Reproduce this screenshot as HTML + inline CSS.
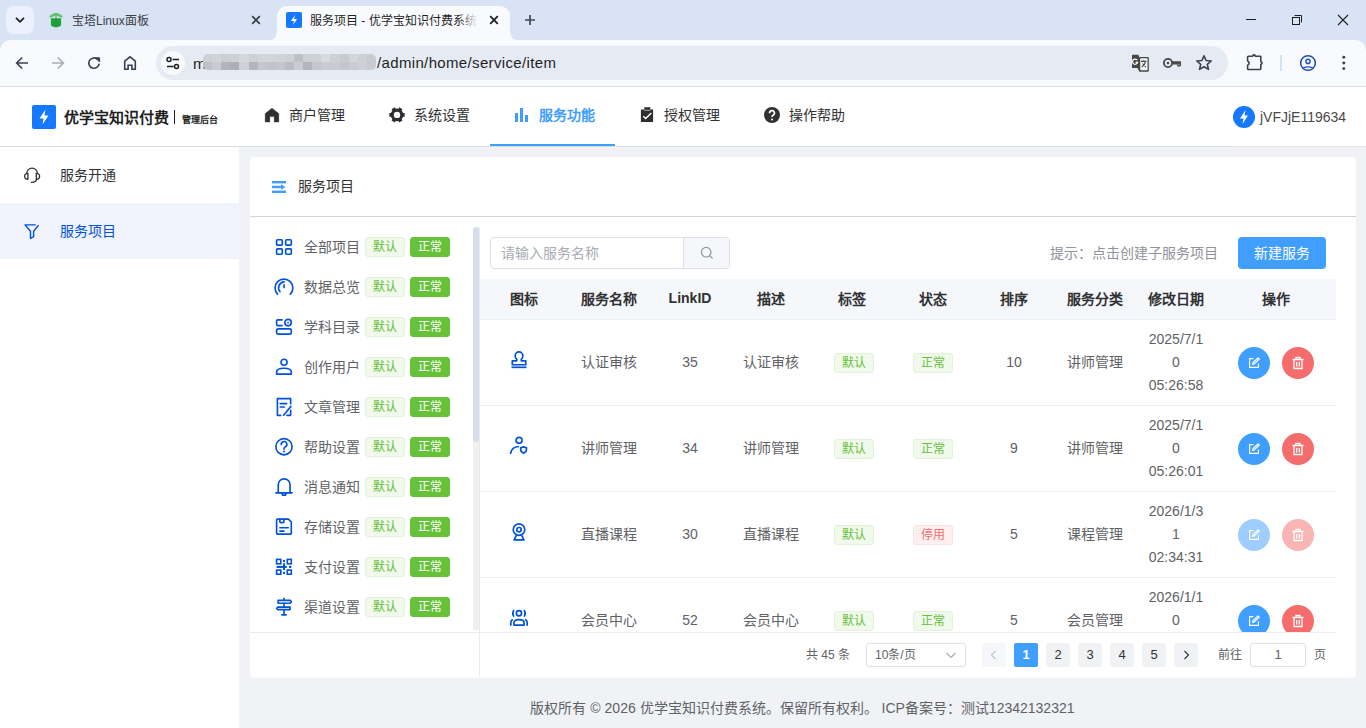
<!DOCTYPE html>
<html lang="zh-CN"><head><meta charset="utf-8">
<style>
*{box-sizing:border-box;margin:0;padding:0}
html,body{width:1366px;height:728px;overflow:hidden;background:#f0f2f5;font-family:"Liberation Sans",sans-serif;color:#303133}
.abs{position:absolute}
svg{display:block}
/* chrome */
#tabstrip{position:absolute;left:0;top:0;width:1366px;height:50px;background:#d8e3f6}
#toolbar{position:absolute;left:0;top:40px;width:1366px;height:46px;background:#f8fafd;border-radius:10px 10px 0 0}
#tbborder{position:absolute;left:0;top:86px;width:1366px;height:1px;background:#d9dfe8}
.tab-text{position:absolute;font-size:12px;line-height:16px;color:#3c4043;white-space:nowrap}
/* header */
#header{position:absolute;left:0;top:87px;width:1366px;height:59px;background:#fff}
#hborder{position:absolute;left:0;top:146px;width:1233px;height:1px;background:#dcdee6}
.nav{position:absolute;top:87px;height:59px;font-size:14px;color:#303133;white-space:nowrap}
/* sidebar */
#sidebar{position:absolute;left:0;top:147px;width:239px;height:581px;background:#fff}
.side-item{position:absolute;left:0;width:239px;height:56px;font-size:14px;color:#303133}
/* card */
#card{position:absolute;left:250px;top:157px;width:1106px;height:521px;background:#fff;border-radius:4px}
.tag{position:absolute;height:20px;width:40px;border-radius:3px;font-size:12px;line-height:18px;text-align:center}
.tag-def{background:#f0f9eb;border:1px solid #e1f3d8;color:#67c23a}
.tag-ok{background:#67c23a;border:1px solid #67c23a;color:#fff}
.tag-stop{background:#fef0f0;border:1px solid #fde2e2;color:#f56c6c}
.li{position:absolute;left:250px;width:224px;height:40px}
.li .t{position:absolute;left:54px;top:11px;font-size:14px;color:#606266;line-height:18px}
.li svg{position:absolute;left:25px;top:12px}
table{border-collapse:separate;border-spacing:0;table-layout:fixed;position:absolute;left:480px;top:279px;width:856px}
th{height:41px;padding:0 0 2px 0;background:#f5f7fa;font-size:14px;font-weight:bold;color:#303133;border-bottom:1px solid #ebeef5;text-align:center}
td{height:86px;padding:0;font-size:14px;color:#606266;border-bottom:1px solid #ebeef5;text-align:center;line-height:23px;position:relative}
.cbtn{display:inline-block;width:32px;height:32px;border-radius:50%;vertical-align:middle;position:relative}
.pg{position:absolute;top:643px;width:24px;height:24px;background:#f0f2f5;border-radius:2px;font-size:13px;line-height:24px;text-align:center;color:#303133;font-weight:normal}
</style></head><body>

<!-- ============ CHROME ============ -->
<div id="tabstrip"></div>
<!-- tab list button -->
<div class="abs" style="left:6px;top:6px;width:28px;height:28px;border-radius:8px;background:#eaf0fc"></div>
<svg class="abs" style="left:14px;top:15px" width="12" height="10" viewBox="0 0 12 10"><path d="M2 2.8L6 6.8L10 2.8" stroke="#1f1f1f" stroke-width="1.7" fill="none"/></svg>
<!-- tab 1 -->
<svg class="abs" style="left:44px;top:8px" width="24" height="24" viewBox="0 0 24 24"><path d="M6.9 10.2H17.1V16.8C17.1 18 14.8 19.2 12 19.3C9.2 19.2 6.9 18 6.9 16.8Z" fill="#22a33a"/><path d="M12 10.2V19.3" stroke="#1b8e30" stroke-width=".6"/><g stroke="#4fb75e" stroke-width="1.3" fill="none" opacity=".9"><path d="M5.6 9.1L12 6.8L18.4 9.1"/><path d="M6.3 7.5L12 5.4L17.7 7.5"/><path d="M12 4.9V9.9"/></g></svg>
<div class="tab-text" style="left:72px;top:13px">宝塔Linux面板</div>
<svg class="abs" style="left:251px;top:15px" width="10" height="10" viewBox="0 0 10 10"><path d="M1.2 1.2L8.8 8.8M8.8 1.2L1.2 8.8" stroke="#3c4043" stroke-width="1.8"/></svg>
<!-- active tab -->
<div class="abs" style="left:277px;top:6px;width:233px;height:40px;background:#f8fafd;border-radius:10px 10px 0 0"></div>
<svg class="abs" style="left:269px;top:30px" width="8" height="10"><path d="M0 10 Q8 10 8 0 L8 10Z" fill="#f8fafd"/></svg>
<svg class="abs" style="left:510px;top:30px" width="8" height="10"><path d="M8 10 Q0 10 0 0 L0 10Z" fill="#f8fafd"/></svg>
<div class="abs" style="left:286px;top:12px;width:16px;height:16px;background:#1677ff;border-radius:2px"></div>
<svg class="abs" style="left:286px;top:12px" width="16" height="16" viewBox="0 0 16 16"><path d="M9 3 L5 9 L8 9 L7 13 L11 7 L8 7Z" fill="#fff"/></svg>
<div class="tab-text" style="left:310px;top:13px;width:170px;overflow:hidden;color:#1f1f1f">服务项目 - 优学宝知识付费系统</div>
<div class="abs" style="left:458px;top:8px;width:24px;height:24px;background:linear-gradient(90deg,rgba(248,250,253,0),rgba(248,250,253,.85) 70%,#f8fafd)"></div>
<svg class="abs" style="left:489px;top:15px" width="10" height="10" viewBox="0 0 10 10"><path d="M1.2 1.2L8.8 8.8M8.8 1.2L1.2 8.8" stroke="#1f1f1f" stroke-width="1.8"/></svg>
<svg class="abs" style="left:523px;top:13px" width="14" height="14" viewBox="0 0 14 14"><path d="M7 2V12M2 7H12" stroke="#3f4753" stroke-width="1.7"/></svg>
<!-- window controls -->
<svg class="abs" style="left:1246px;top:18px" width="10" height="3"><rect x="0" y="1" width="10" height="1" fill="#1f1f1f"/></svg>
<svg class="abs" style="left:1291px;top:14px" width="12" height="12" viewBox="0 0 12 12"><rect x="1.5" y="3.5" width="7" height="7" stroke="#1f1f1f" fill="none"/><path d="M3.5 1.5H10.5V8.5" stroke="#1f1f1f" fill="none"/></svg>
<svg class="abs" style="left:1337px;top:14px" width="12" height="12" viewBox="0 0 12 12"><path d="M1 1L11 11M11 1L1 11" stroke="#1f1f1f" stroke-width="1.1"/></svg>

<div id="toolbar"></div>
<div id="tbborder"></div>
<!-- nav icons -->
<svg class="abs" style="left:14px;top:51px" width="16" height="24" viewBox="0 0 16 24"><path d="M14 12H3M8.2 6.5L2.6 12L8.2 17.5" stroke="#38414f" stroke-width="1.6" fill="none"/></svg>
<svg class="abs" style="left:50px;top:51px" width="16" height="24" viewBox="0 0 16 24"><path d="M2 12H13M7.8 6.5L13.4 12L7.8 17.5" stroke="#a9adb4" stroke-width="1.6" fill="none"/></svg>
<svg class="abs" style="left:86px;top:51px" width="16" height="24" viewBox="0 0 16 24"><path d="M13.2 12.6A5.2 5.2 0 1 1 11.6 8.3" stroke="#38414f" stroke-width="1.6" fill="none"/><path d="M9.4 6.8H13.6V11Z" fill="#38414f" stroke="#38414f" stroke-width="1"/></svg>
<svg class="abs" style="left:122px;top:51px" width="16" height="24" viewBox="0 0 16 24"><path d="M2.7 18.2V10.2L8 5.8L13.3 10.2V18.2H9.9V14.3H6.1V18.2Z" stroke="#38414f" stroke-width="1.6" fill="none" stroke-linejoin="miter"/></svg>
<!-- url pill -->
<div class="abs" style="left:156px;top:46px;width:1072px;height:34px;border-radius:17px;background:#e6ebf3"></div>
<div class="abs" style="left:161px;top:51px;width:24px;height:24px;border-radius:12px;background:#f8fafd"></div>
<svg class="abs" style="left:165px;top:55px" width="16" height="16" viewBox="0 0 16 16"><circle cx="4" cy="4.5" r="2" stroke="#1f1f1f" stroke-width="1.5" fill="none"/><path d="M7.5 4.5H14M2 11.5H8.5" stroke="#1f1f1f" stroke-width="1.5"/><circle cx="11.5" cy="11.5" r="2" stroke="#1f1f1f" stroke-width="1.5" fill="none"/></svg>
<div class="abs" style="left:193px;top:55px;font-size:15.5px;color:#1f1f1f">m</div>
<div class="abs" style="left:203px;top:54px;width:173px;height:16px;border-radius:5px;overflow:hidden"><div style="position:absolute;left:0.0px;top:0;width:9.2px;height:8px;background:rgb(205,208,214)"></div><div style="position:absolute;left:0.0px;top:8px;width:9.2px;height:8px;background:rgb(190,193,199)"></div><div style="position:absolute;left:9.1px;top:0;width:9.2px;height:8px;background:rgb(208,211,217)"></div><div style="position:absolute;left:9.1px;top:8px;width:9.2px;height:8px;background:rgb(200,203,209)"></div><div style="position:absolute;left:18.2px;top:0;width:9.2px;height:8px;background:rgb(203,206,212)"></div><div style="position:absolute;left:18.2px;top:8px;width:9.2px;height:8px;background:rgb(178,181,187)"></div><div style="position:absolute;left:27.3px;top:0;width:9.2px;height:8px;background:rgb(205,208,214)"></div><div style="position:absolute;left:27.3px;top:8px;width:9.2px;height:8px;background:rgb(172,175,181)"></div><div style="position:absolute;left:36.4px;top:0;width:9.2px;height:8px;background:rgb(212,215,221)"></div><div style="position:absolute;left:36.4px;top:8px;width:9.2px;height:8px;background:rgb(205,208,214)"></div><div style="position:absolute;left:45.5px;top:0;width:9.2px;height:8px;background:rgb(205,208,214)"></div><div style="position:absolute;left:45.5px;top:8px;width:9.2px;height:8px;background:rgb(178,181,187)"></div><div style="position:absolute;left:54.6px;top:0;width:9.2px;height:8px;background:rgb(210,213,219)"></div><div style="position:absolute;left:54.6px;top:8px;width:9.2px;height:8px;background:rgb(195,198,204)"></div><div style="position:absolute;left:63.7px;top:0;width:9.2px;height:8px;background:rgb(210,213,219)"></div><div style="position:absolute;left:63.7px;top:8px;width:9.2px;height:8px;background:rgb(192,195,201)"></div><div style="position:absolute;left:72.8px;top:0;width:9.2px;height:8px;background:rgb(208,211,217)"></div><div style="position:absolute;left:72.8px;top:8px;width:9.2px;height:8px;background:rgb(195,198,204)"></div><div style="position:absolute;left:81.9px;top:0;width:9.2px;height:8px;background:rgb(205,208,214)"></div><div style="position:absolute;left:81.9px;top:8px;width:9.2px;height:8px;background:rgb(185,188,194)"></div><div style="position:absolute;left:91.0px;top:0;width:9.2px;height:8px;background:rgb(190,193,199)"></div><div style="position:absolute;left:91.0px;top:8px;width:9.2px;height:8px;background:rgb(200,203,209)"></div><div style="position:absolute;left:100.1px;top:0;width:9.2px;height:8px;background:rgb(205,208,214)"></div><div style="position:absolute;left:100.1px;top:8px;width:9.2px;height:8px;background:rgb(178,181,187)"></div><div style="position:absolute;left:109.2px;top:0;width:9.2px;height:8px;background:rgb(205,208,214)"></div><div style="position:absolute;left:109.2px;top:8px;width:9.2px;height:8px;background:rgb(195,198,204)"></div><div style="position:absolute;left:118.3px;top:0;width:9.2px;height:8px;background:rgb(215,218,224)"></div><div style="position:absolute;left:118.3px;top:8px;width:9.2px;height:8px;background:rgb(200,203,209)"></div><div style="position:absolute;left:127.4px;top:0;width:9.2px;height:8px;background:rgb(205,208,214)"></div><div style="position:absolute;left:127.4px;top:8px;width:9.2px;height:8px;background:rgb(200,203,209)"></div><div style="position:absolute;left:136.5px;top:0;width:9.2px;height:8px;background:rgb(200,203,209)"></div><div style="position:absolute;left:136.5px;top:8px;width:9.2px;height:8px;background:rgb(195,198,204)"></div><div style="position:absolute;left:145.6px;top:0;width:9.2px;height:8px;background:rgb(210,213,219)"></div><div style="position:absolute;left:145.6px;top:8px;width:9.2px;height:8px;background:rgb(200,203,209)"></div><div style="position:absolute;left:154.7px;top:0;width:9.2px;height:8px;background:rgb(205,208,214)"></div><div style="position:absolute;left:154.7px;top:8px;width:9.2px;height:8px;background:rgb(205,208,214)"></div><div style="position:absolute;left:163.8px;top:0;width:9.2px;height:8px;background:rgb(200,203,209)"></div><div style="position:absolute;left:163.8px;top:8px;width:9.2px;height:8px;background:rgb(200,203,209)"></div></div>
<div class="abs" style="left:377px;top:54px;font-size:15px;letter-spacing:0.35px;color:#1f1f1f;white-space:nowrap">/admin/home/service/item</div>
<!-- right icons -->
<svg class="abs" style="left:1128px;top:52px" width="24" height="22" viewBox="0 0 24 22"><path d="M4.6 2.8H10.5L11.5 5.5V16H4.6A0.6 0.6 0 0 1 4 15.4V3.4A0.6 0.6 0 0 1 4.6 2.8Z" fill="#474747"/><rect x="11.6" y="5.6" width="8.6" height="13.4" rx="0.6" fill="#f2f4f8" stroke="#474747" stroke-width="1.3"/><path d="M10 16L12.2 19" stroke="#474747" stroke-width="1.3"/><path d="M9.2 8.2A2.6 2.6 0 1 0 9.6 10.3H7.5" stroke="#fff" stroke-width="1.2" fill="none"/><path d="M13 9.4H18.4M15.7 8.2V9.4M17.6 9.4C17 12.2 15.6 14 13.8 15M14.5 11.5L17.8 15.2" stroke="#474747" stroke-width="1.1" fill="none"/></svg>
<svg class="abs" style="left:1161px;top:55px" width="22" height="16" viewBox="0 0 22 16"><circle cx="7" cy="8" r="4.1" stroke="#474747" stroke-width="1.8" fill="none"/><circle cx="7" cy="8" r="1.3" fill="#474747"/><path d="M11 6.3H19.2A0.8 0.8 0 0 1 20 7.1V10.6A0.8 0.8 0 0 1 19.2 11.4H16.2V9.6H11Z" fill="#474747"/><rect x="16.8" y="8.8" width="2" height="1.6" fill="#8a8d92"/></svg>
<svg class="abs" style="left:1195px;top:54px" width="18" height="18" viewBox="0 0 18 18"><path d="M9 1.8L11.1 6.5L16.2 7L12.3 10.4L13.5 15.4L9 12.8L4.5 15.4L5.7 10.4L1.8 7L6.9 6.5Z" stroke="#38414f" stroke-width="1.6" fill="none" stroke-linejoin="round"/></svg>
<svg class="abs" style="left:1244px;top:51px" width="20" height="22" viewBox="0 0 20 22"><path d="M4.4 5.2H8.7A1.3 1.3 0 0 1 11.3 5.2H16A0.8 0.8 0 0 1 16.8 6V10.8A1.3 1.3 0 0 1 16.8 13.4V17.7A0.8 0.8 0 0 1 16 18.5H4.4A0.8 0.8 0 0 1 3.6 17.7V14.2A2.2 2.2 0 0 0 3.6 10V6A0.8 0.8 0 0 1 4.4 5.2Z" stroke="#38414f" stroke-width="1.6" fill="none" stroke-linejoin="round"/></svg>
<div class="abs" style="left:1280px;top:55px;width:2px;height:16px;background:#d3e1f9"></div>
<svg class="abs" style="left:1298px;top:53px" width="20" height="20" viewBox="0 0 20 20"><defs><clipPath id="pc"><circle cx="10" cy="10" r="7.2"/></clipPath></defs><circle cx="10" cy="10" r="7.3" stroke="#1e4db7" stroke-width="1.5" fill="none"/><circle cx="10" cy="8.4" r="2.1" stroke="#1e4db7" stroke-width="1.4" fill="none"/><ellipse cx="10" cy="17.2" rx="6.2" ry="3.3" stroke="#1e4db7" stroke-width="1.4" fill="none" clip-path="url(#pc)"/></svg>
<svg class="abs" style="left:1341px;top:54px" width="6" height="18"><circle cx="2.8" cy="3.3" r="1.45" fill="#38414f"/><circle cx="2.8" cy="9" r="1.45" fill="#38414f"/><circle cx="2.8" cy="14.6" r="1.45" fill="#38414f"/></svg>

<!-- ============ APP HEADER ============ -->
<div id="header"></div>
<div id="hborder"></div><div class="abs" style="left:1233px;top:146px;width:133px;height:1px;background:#e5e6eb"></div>

<!-- logo -->
<div class="abs" style="left:32px;top:105px;width:24px;height:24px;background:#1677ff;border-radius:2px"></div>
<svg class="abs" style="left:32px;top:105px" width="24" height="24" viewBox="0 0 24 24"><path d="M13.5 4.5 L7.5 13.5 L11.5 13.5 L10.5 19.5 L16.5 10.5 L12.5 10.5Z" fill="#fff"/></svg>
<div class="abs" style="left:64px;top:106px;font-size:15px;font-weight:bold;color:#1f1f1f;white-space:nowrap">优学宝知识付费</div>
<div class="abs" style="left:174px;top:110px;width:1px;height:14px;background:#1f1f1f"></div>
<div class="abs" style="left:182px;top:113px;font-size:9px;font-weight:bold;color:#1f1f1f;white-space:nowrap">管理后台</div>
<!-- nav -->
<svg class="abs" style="left:260px;top:103px" width="24" height="24" viewBox="0 0 24 24"><path d="M12 5.2L5.2 10.6V18.9H9.8V13.6H14.2V18.9H18.8V10.6Z" fill="#2d2e30" stroke="#2d2e30" stroke-width=".4" stroke-linejoin="round"/></svg>
<div class="nav" style="left:289px;line-height:56px">商户管理</div>
<svg class="abs" style="left:385px;top:103px" width="24" height="24" viewBox="0 0 24 24"><path d="M17.46 8.75 L18.02 10.04 L19.67 10.02 L19.67 13.78 L18.02 13.76 L17.46 15.05 L16.62 16.18 L17.46 17.61 L14.21 19.48 L13.40 18.04 L12.00 18.20 L10.60 18.04 L9.79 19.48 L6.54 17.61 L7.38 16.18 L6.54 15.05 L5.98 13.76 L4.33 13.78 L4.33 10.02 L5.98 10.04 L6.54 8.75 L7.38 7.62 L6.54 6.19 L9.79 4.32 L10.60 5.76 L12.00 5.60 L13.40 5.76 L14.21 4.32 L17.46 6.19 L16.62 7.62Z M15.2 11.9A3.2 3.2 0 1 0 8.8 11.9A3.2 3.2 0 1 0 15.2 11.9Z" fill="#2d2e30" fill-rule="evenodd"/></svg>
<div class="nav" style="left:414px;line-height:56px">系统设置</div>
<svg class="abs" style="left:514px;top:108px" width="16" height="14" viewBox="0 0 16 14"><rect x="1" y="5" width="3" height="9" fill="#409eff"/><rect x="6" y="0" width="3" height="14" fill="#409eff"/><rect x="11" y="7" width="3" height="7" fill="#409eff"/></svg>
<div class="nav" style="left:539px;line-height:56px;color:#409eff;font-weight:bold">服务功能</div>
<div class="abs" style="left:490px;top:144px;width:125px;height:2px;background:#409eff"></div>
<svg class="abs" style="left:636px;top:103px" width="24" height="24" viewBox="0 0 24 24"><path d="M4.9 6.4H8.6L8.1 4.3H14.5L14 6.4H17.1V19H4.9Z" fill="#2d2e30"/><path d="M8.2 7.3H14.4" stroke="#aaa" stroke-width="1"/><path d="M7.3 13.2L9.7 15.6L15.3 10" stroke="#fff" stroke-width="1.4" fill="none"/></svg>
<div class="nav" style="left:664px;line-height:56px">授权管理</div>
<svg class="abs" style="left:764px;top:107px" width="16" height="16" viewBox="0 0 16 16"><circle cx="8" cy="8" r="8" fill="#303133"/><path d="M5.6 6.2A2.4 2.4 0 1 1 9 8.2C8.2 8.6 8 9 8 10" stroke="#fff" stroke-width="1.7" fill="none"/><circle cx="8" cy="12.4" r="1" fill="#fff"/></svg>
<div class="nav" style="left:789px;line-height:56px">操作帮助</div>
<!-- user -->
<div class="abs" style="left:1233px;top:106px;width:22px;height:22px;border-radius:50%;background:#1677ff"></div>
<svg class="abs" style="left:1233px;top:106px" width="22" height="22" viewBox="0 0 22 22"><path d="M12.5 4 L7 12.5 L10.5 12.5 L9.5 18 L15 9.5 L11.5 9.5Z" fill="#fff"/></svg>
<div class="abs" style="left:1260px;top:109px;font-size:14px;color:#4a4a4a;white-space:nowrap">jVFJjE119634</div>

<!-- ============ SIDEBAR ============ -->
<div id="sidebar"></div>
<div class="abs" style="left:0;top:203px;width:239px;height:56px;background:#f0f2fc"></div>
<svg class="abs" style="left:20px;top:163px" width="24" height="24" viewBox="0 0 24 24"><g stroke="#303133" stroke-width="1.3" fill="none" stroke-linejoin="round"><path d="M6.8 10.4A5.3 5.3 0 0 1 17.4 10.4"/><path d="M7.9 10.3V16.3C5.8 16.3 4.6 15.2 4.6 13.3C4.6 11.4 5.8 10.3 7.9 10.3Z"/><path d="M16.3 10.3V16.3C18.4 16.3 19.6 15.2 19.6 13.3C19.6 11.4 18.4 10.3 16.3 10.3Z"/><path d="M16.5 16.3C16.5 18.3 15 19.4 11.3 19.4" stroke-linecap="round"/></g></svg>
<div class="abs" style="left:60px;top:166px;font-size:14px;line-height:18px;color:#303133;white-space:nowrap">服务开通</div>
<svg class="abs" style="left:20px;top:219px" width="24" height="24" viewBox="0 0 24 24"><path d="M15.8 5.9H5L10.5 12.2V19.5L13.6 17.7V12.2L18.6 6.1" stroke="#0052d9" stroke-width="1.4" fill="none" stroke-linejoin="round"/></svg>
<div class="abs" style="left:60px;top:222px;font-size:14px;line-height:18px;color:#0052d9;white-space:nowrap">服务项目</div>

<!-- ============ CARD ============ -->
<div id="card"></div>
<svg class="abs" style="left:272px;top:181px" width="14" height="12" viewBox="0 0 14 12"><rect x="0" y="0" width="14" height="2.4" fill="#409eff"/><rect x="0" y="4.8" width="9" height="2.4" fill="#409eff"/><path d="M9 3.2L13.5 6L9 8.8Z" fill="#409eff"/><rect x="0" y="9.6" width="14" height="2.4" fill="#409eff"/></svg>
<div class="abs" style="left:298px;top:175px;font-size:14px;color:#303133;white-space:nowrap">服务项目</div>
<div class="abs" style="left:250px;top:216px;width:1106px;height:1px;background:#d4d4d4"></div>
<div class="abs" style="left:479px;top:632px;width:1px;height:45px;background:#ebebeb"></div>
<div class="abs" style="left:250px;top:632px;width:230px;height:1px;background:#ebebeb"></div>
<!-- scrollbar -->
<div class="abs" style="left:473px;top:227px;width:6px;height:404px;border-radius:3px;background:#f0f0f0"></div><div class="abs" style="left:479px;top:227px;width:1px;height:405px;background:#e9e9e9"></div><div class="abs" style="left:473px;top:227px;width:6px;height:215px;border-radius:3px;background:#d6deec"></div>


<!-- left list -->
<svg class="abs" style="left:272px;top:235px" width="24" height="24" viewBox="0 0 24 24"><g stroke="#0052d9" stroke-width="1.65" fill="none" stroke-linecap="round" stroke-linejoin="round"><rect x="4.6" y="4.75" width="5.65" height="5.4" rx="0.9"/><rect x="13.66" y="4.75" width="5.65" height="5.4" rx="0.9"/><rect x="4.6" y="13.8" width="5.65" height="5.4" rx="0.9"/><rect x="13.66" y="13.8" width="5.65" height="5.4" rx="0.9"/></g></svg>
<svg class="abs" style="left:272px;top:275px" width="24" height="24" viewBox="0 0 24 24"><g stroke="#0052d9" stroke-width="1.65" fill="none" stroke-linecap="round" stroke-linejoin="round"><path d="M5.6 19.2A8.9 8.9 0 1 1 18.3 19.2"/><path d="M8 16.6A5.9 5.9 0 0 1 12.1 6.9"/><path d="M12.05 9.9V12.6"/></g></svg>
<svg class="abs" style="left:272px;top:315px" width="24" height="24" viewBox="0 0 24 24"><g stroke="#0052d9" stroke-width="1.65" fill="none" stroke-linecap="round" stroke-linejoin="round"><path d="M10.1 4.8H5.8A1.2 1.2 0 0 0 4.6 6V9.4A1.2 1.2 0 0 0 5.8 10.6H10.1"/><circle cx="16.05" cy="7.6" r="3.25"/><rect x="4.6" y="13.8" width="14.7" height="5.35" rx="1.7"/></g><circle cx="16.05" cy="7.65" r="0.95" fill="#0052d9"/></svg>
<svg class="abs" style="left:272px;top:355px" width="24" height="24" viewBox="0 0 24 24"><g stroke="#0052d9" stroke-width="1.65" fill="none" stroke-linecap="round" stroke-linejoin="round"><circle cx="12.05" cy="7.25" r="3"/><path d="M4.6 19.15V17C4.6 14.3 7 13.2 12 13.2S19.3 14.3 19.3 17V19.15Z"/></g></svg>
<svg class="abs" style="left:272px;top:395px" width="24" height="24" viewBox="0 0 24 24"><g stroke="#0052d9" stroke-width="1.65" fill="none" stroke-linecap="round" stroke-linejoin="round"><path d="M8.7 20.3H5.4V3.6H18.65V8.7"/><path d="M18.65 15.4V20.3H14.9"/><path d="M8.2 8.6H14.7M8.2 12H12.4"/><path d="M11.6 20.2L18.9 11.4"/></g></svg>
<svg class="abs" style="left:272px;top:435px" width="24" height="24" viewBox="0 0 24 24"><g stroke="#0052d9" stroke-width="1.65" fill="none" stroke-linecap="round" stroke-linejoin="round"><circle cx="12" cy="11.7" r="8.1"/><path d="M9.3 9.7A2.8 2.8 0 1 1 13.4 11.8C12.5 12.3 12.05 12.8 12.05 13.6V14.2"/></g><rect x="11.1" y="15.8" width="1.9" height="1.5" fill="#0052d9"/></svg>
<svg class="abs" style="left:272px;top:475px" width="24" height="24" viewBox="0 0 24 24"><g stroke="#0052d9" stroke-width="1.65" fill="none" stroke-linecap="round" stroke-linejoin="round"><path d="M6.25 17.8V9.7A5.9 5.9 0 0 1 18.05 9.7V17.8"/><path d="M3.9 17.8H20.1"/><path d="M10 18.4L10.7 20.1H13.5L14.2 18.4"/></g></svg>
<svg class="abs" style="left:272px;top:515px" width="24" height="24" viewBox="0 0 24 24"><g stroke="#0052d9" stroke-width="1.65" fill="none" stroke-linecap="round" stroke-linejoin="round"><path d="M5.6 4.1H16.4L19.3 7V18.15A1 1 0 0 1 18.3 19.15H5.6A1 1 0 0 1 4.6 18.15V5.1A1 1 0 0 1 5.6 4.1Z"/><path d="M7.9 4.1V6.7A0.9 0.9 0 0 0 8.8 7.6H11A0.9 0.9 0 0 0 11.9 6.7V4.1"/><path d="M7.9 12.7H16.2M7.9 16.15H11.9"/></g></svg>
<svg class="abs" style="left:272px;top:555px" width="24" height="24" viewBox="0 0 24 24"><g stroke="#0052d9" stroke-width="1.6" fill="none"><rect x="4.6" y="4.4" width="4.2" height="4.4"/><rect x="15.3" y="4.4" width="4.0" height="4.4"/><rect x="4.6" y="15.1" width="4.2" height="4.1"/><rect x="15.3" y="15.1" width="4.0" height="4.1"/></g><g fill="#0052d9"><rect x="11.05" y="4.9" width="1.95" height="2.2"/><rect x="4.6" y="10.9" width="10.2" height="2.05"/><rect x="11.05" y="8.2" width="1.95" height="6.8"/><rect x="17" y="10.9" width="2.3" height="2.05"/><rect x="11.05" y="16.8" width="1.95" height="2.2"/></g></svg>
<svg class="abs" style="left:272px;top:595px" width="24" height="24" viewBox="0 0 24 24"><g stroke="#0052d9" stroke-width="1.65" fill="none" stroke-linecap="round" stroke-linejoin="round"><path d="M12.05 3.4V5.2M12.05 8.3V12M12.05 14.7V19.9M9.9 19.9H14.1"/><path d="M6.15 5.3H18.2L19.4 6.75L18.2 8.2H6.15Z"/><path d="M5.9 12.05H18V14.65H5.9L4.7 13.35Z"/></g></svg>
<div class="abs" style="left:304px;top:238px;font-size:14px;line-height:18px;color:#606266;white-space:nowrap">全部项目</div>
<div class="tag tag-def" style="left:365px;top:237px">默认</div>
<div class="tag tag-ok" style="left:410px;top:237px">正常</div>
<div class="abs" style="left:304px;top:278px;font-size:14px;line-height:18px;color:#606266;white-space:nowrap">数据总览</div>
<div class="tag tag-def" style="left:365px;top:277px">默认</div>
<div class="tag tag-ok" style="left:410px;top:277px">正常</div>
<div class="abs" style="left:304px;top:318px;font-size:14px;line-height:18px;color:#606266;white-space:nowrap">学科目录</div>
<div class="tag tag-def" style="left:365px;top:317px">默认</div>
<div class="tag tag-ok" style="left:410px;top:317px">正常</div>
<div class="abs" style="left:304px;top:358px;font-size:14px;line-height:18px;color:#606266;white-space:nowrap">创作用户</div>
<div class="tag tag-def" style="left:365px;top:357px">默认</div>
<div class="tag tag-ok" style="left:410px;top:357px">正常</div>
<div class="abs" style="left:304px;top:398px;font-size:14px;line-height:18px;color:#606266;white-space:nowrap">文章管理</div>
<div class="tag tag-def" style="left:365px;top:397px">默认</div>
<div class="tag tag-ok" style="left:410px;top:397px">正常</div>
<div class="abs" style="left:304px;top:438px;font-size:14px;line-height:18px;color:#606266;white-space:nowrap">帮助设置</div>
<div class="tag tag-def" style="left:365px;top:437px">默认</div>
<div class="tag tag-ok" style="left:410px;top:437px">正常</div>
<div class="abs" style="left:304px;top:478px;font-size:14px;line-height:18px;color:#606266;white-space:nowrap">消息通知</div>
<div class="tag tag-def" style="left:365px;top:477px">默认</div>
<div class="tag tag-ok" style="left:410px;top:477px">正常</div>
<div class="abs" style="left:304px;top:518px;font-size:14px;line-height:18px;color:#606266;white-space:nowrap">存储设置</div>
<div class="tag tag-def" style="left:365px;top:517px">默认</div>
<div class="tag tag-ok" style="left:410px;top:517px">正常</div>
<div class="abs" style="left:304px;top:558px;font-size:14px;line-height:18px;color:#606266;white-space:nowrap">支付设置</div>
<div class="tag tag-def" style="left:365px;top:557px">默认</div>
<div class="tag tag-ok" style="left:410px;top:557px">正常</div>
<div class="abs" style="left:304px;top:598px;font-size:14px;line-height:18px;color:#606266;white-space:nowrap">渠道设置</div>
<div class="tag tag-def" style="left:365px;top:597px">默认</div>
<div class="tag tag-ok" style="left:410px;top:597px">正常</div>


<!-- search -->
<div class="abs" style="left:490px;top:237px;width:240px;height:32px;border:1px solid #dcdfe6;border-radius:4px;background:#fff"></div>
<div class="abs" style="left:683px;top:238px;width:46px;height:30px;background:#f5f7fa;border-left:1px solid #dcdfe6;border-radius:0 3px 3px 0"></div>
<svg class="abs" style="left:700px;top:246px" width="14" height="14" viewBox="0 0 14 14"><g stroke="#909399" stroke-width="1.2" fill="none"><circle cx="6.2" cy="6.2" r="4.8"/><path d="M9.7 9.7L12.6 12.6"/></g></svg>
<div class="abs" style="left:501px;top:244px;font-size:14px;line-height:18px;color:#a8abb2;white-space:nowrap">请输入服务名称</div>
<div class="abs" style="left:1050px;top:244px;font-size:14px;line-height:18px;color:#909399;white-space:nowrap">提示：点击创建子服务项目</div>
<div class="abs" style="left:1238px;top:237px;width:88px;height:32px;border-radius:4px;background:#409eff;color:#fff;font-size:14px;line-height:32px;text-align:center">新建服务</div>
<!-- table -->
<div class="abs" style="left:480px;top:279px;width:856px;height:353px;overflow:hidden">
<table style="left:0;top:0">
<colgroup><col style="width:88.5px"><col style="width:81px"><col style="width:81px"><col style="width:81px"><col style="width:81px"><col style="width:81px"><col style="width:81px"><col style="width:81px"><col style="width:81px"><col style="width:119.5px"></colgroup>
<tr><th>图标</th><th>服务名称</th><th>LinkID</th><th>描述</th><th>标签</th><th>状态</th><th>排序</th><th>服务分类</th><th>修改日期</th><th>操作</th></tr>
<tr><td></td><td>认证审核</td><td>35</td><td>认证审核</td>
<td><span class="tag tag-def" style="position:relative;display:inline-block;left:2px">默认</span></td>
<td><span class="tag tag-def" style="position:relative;display:inline-block">正常</span></td>
<td>10</td><td>讲师管理</td><td>2025/7/1<br>0<br>05:26:58</td>
<td><span class="cbtn" style="background:#409eff;"><svg width="14" height="14" viewBox="0 0 14 14" style="position:absolute;left:9px;top:9px"><g stroke="#fff" stroke-width="1.15" fill="none"><path d="M6.5 2.6H2.6V11.4H11.4V7.5"/><path d="M11 1.8L12.2 3L7 8.2L5.6 8.4L5.8 7Z" stroke-linejoin="round"/></g></svg></span><span class="cbtn" style="background:#f56c6c;margin-left:12px;"><svg width="14" height="14" viewBox="0 0 14 14" style="position:absolute;left:9px;top:9px"><g stroke="#fff" stroke-width="1.3" fill="none"><path d="M1.5 3.5H12.5M5 3.5V1.5H9V3.5M3 3.5V12.5H11V3.5M5.7 6V10.5M8.3 6V10.5"/></g></svg></span></td></tr>
<tr><td></td><td>讲师管理</td><td>34</td><td>讲师管理</td>
<td><span class="tag tag-def" style="position:relative;display:inline-block;left:2px">默认</span></td>
<td><span class="tag tag-def" style="position:relative;display:inline-block">正常</span></td>
<td>9</td><td>讲师管理</td><td>2025/7/1<br>0<br>05:26:01</td>
<td><span class="cbtn" style="background:#409eff;"><svg width="14" height="14" viewBox="0 0 14 14" style="position:absolute;left:9px;top:9px"><g stroke="#fff" stroke-width="1.15" fill="none"><path d="M6.5 2.6H2.6V11.4H11.4V7.5"/><path d="M11 1.8L12.2 3L7 8.2L5.6 8.4L5.8 7Z" stroke-linejoin="round"/></g></svg></span><span class="cbtn" style="background:#f56c6c;margin-left:12px;"><svg width="14" height="14" viewBox="0 0 14 14" style="position:absolute;left:9px;top:9px"><g stroke="#fff" stroke-width="1.3" fill="none"><path d="M1.5 3.5H12.5M5 3.5V1.5H9V3.5M3 3.5V12.5H11V3.5M5.7 6V10.5M8.3 6V10.5"/></g></svg></span></td></tr>
<tr><td></td><td>直播课程</td><td>30</td><td>直播课程</td>
<td><span class="tag tag-def" style="position:relative;display:inline-block;left:2px">默认</span></td>
<td><span class="tag tag-stop" style="position:relative;display:inline-block">停用</span></td>
<td>5</td><td>课程管理</td><td>2026/1/3<br>1<br>02:34:31</td>
<td><span class="cbtn" style="background:#409eff;opacity:.5"><svg width="14" height="14" viewBox="0 0 14 14" style="position:absolute;left:9px;top:9px"><g stroke="#fff" stroke-width="1.15" fill="none"><path d="M6.5 2.6H2.6V11.4H11.4V7.5"/><path d="M11 1.8L12.2 3L7 8.2L5.6 8.4L5.8 7Z" stroke-linejoin="round"/></g></svg></span><span class="cbtn" style="background:#f56c6c;margin-left:12px;opacity:.5"><svg width="14" height="14" viewBox="0 0 14 14" style="position:absolute;left:9px;top:9px"><g stroke="#fff" stroke-width="1.3" fill="none"><path d="M1.5 3.5H12.5M5 3.5V1.5H9V3.5M3 3.5V12.5H11V3.5M5.7 6V10.5M8.3 6V10.5"/></g></svg></span></td></tr>
<tr><td></td><td>会员中心</td><td>52</td><td>会员中心</td>
<td><span class="tag tag-def" style="position:relative;display:inline-block;left:2px">默认</span></td>
<td><span class="tag tag-def" style="position:relative;display:inline-block">正常</span></td>
<td>5</td><td>会员管理</td><td>2026/1/1<br>0<br>xx</td>
<td><span class="cbtn" style="background:#409eff;"><svg width="14" height="14" viewBox="0 0 14 14" style="position:absolute;left:9px;top:9px"><g stroke="#fff" stroke-width="1.15" fill="none"><path d="M6.5 2.6H2.6V11.4H11.4V7.5"/><path d="M11 1.8L12.2 3L7 8.2L5.6 8.4L5.8 7Z" stroke-linejoin="round"/></g></svg></span><span class="cbtn" style="background:#f56c6c;margin-left:12px;"><svg width="14" height="14" viewBox="0 0 14 14" style="position:absolute;left:9px;top:9px"><g stroke="#fff" stroke-width="1.3" fill="none"><path d="M1.5 3.5H12.5M5 3.5V1.5H9V3.5M3 3.5V12.5H11V3.5M5.7 6V10.5M8.3 6V10.5"/></g></svg></span></td></tr>
</table></div>

<!-- table icons -->
<svg class="abs" style="left:507px;top:348px" width="24" height="24" viewBox="0 0 24 24"><g stroke="#0052d9" stroke-width="1.7" fill="none" stroke-linejoin="round"><path d="M9.7 12.85V11.3C8.7 10.6 8.15 9.3 8.15 7.8A3.85 3.85 0 0 1 15.85 7.8C15.85 9.3 15.3 10.6 14.3 11.3V12.85H18.75V16.75H5.3V12.85Z"/><path d="M4.5 19.3H19.5"/></g></svg>
<svg class="abs" style="left:507px;top:434px" width="24" height="24" viewBox="0 0 24 24"><g stroke="#0052d9" stroke-width="1.7" fill="none" stroke-linecap="round" stroke-linejoin="round"><circle cx="12.05" cy="6.3" r="3"/><path d="M3.6 19.2A8.6 8.6 0 0 1 11.3 12.5"/><path d="M13.7 13.9L16.6 12.9L19.45 13.9V15.8C19.45 17.3 18.2 18.5 16.6 19.1C15 18.5 13.7 17.3 13.7 15.8Z"/></g></svg>
<svg class="abs" style="left:507px;top:520px" width="24" height="24" viewBox="0 0 24 24"><g stroke="#0052d9" stroke-width="1.7" fill="none" stroke-linejoin="round"><circle cx="12" cy="9.65" r="5.75"/><circle cx="12" cy="9.7" r="2.2"/><path d="M9.3 15.3L7.1 19.95H16.9L14.7 15.3"/></g></svg>
<svg class="abs" style="left:507px;top:606px" width="24" height="24" viewBox="0 0 24 24"><g stroke="#0052d9" stroke-width="1.7" fill="none" stroke-linecap="round" stroke-linejoin="round"><circle cx="11.95" cy="7.25" r="2.6"/><path d="M6.6 4.6A5.4 5.4 0 0 0 6.6 10.1M17.4 4.6A5.4 5.4 0 0 1 17.4 10.1"/><path d="M6.95 19.1V16.6C6.95 14.7 8.6 13.7 12 13.7S17.05 14.7 17.05 16.6V19.1Z"/><path d="M5.3 13.8C4.2 14.4 3.8 15.4 3.8 16.9V19.1M18.7 13.8C19.8 14.4 20.2 15.4 20.2 16.9V19.1"/></g></svg>
<div class="abs" style="left:480px;top:632px;width:856px;height:1px;background:#ebeef5"></div>
<!-- pagination -->
<div class="abs" style="left:806px;top:647px;font-size:12px;line-height:16px;color:#606266;white-space:nowrap">共 45 条</div>
<div class="abs" style="left:866px;top:643px;width:100px;height:24px;border:1px solid #dcdfe6;border-radius:3px;background:#fff"></div>
<div class="abs" style="left:875px;top:647px;font-size:12px;line-height:16px;color:#606266;white-space:nowrap">10条/页</div>
<svg class="abs" style="left:945px;top:650px" width="12" height="10" viewBox="0 0 12 10"><path d="M1.5 3L6 7.5L10.5 3" stroke="#a8abb2" stroke-width="1.1" fill="none"/></svg>
<div class="pg" style="left:982px;background:#f5f7fa"></div>
<svg class="abs" style="left:988px;top:649px" width="12" height="12" viewBox="0 0 12 12"><path d="M7.5 2L3.5 6L7.5 10" stroke="#c0c4cc" stroke-width="1.1" fill="none"/></svg>
<div class="pg" style="left:1014px;background:#409eff;color:#fff;font-weight:bold">1</div>
<div class="pg" style="left:1046px">2</div>
<div class="pg" style="left:1078px">3</div>
<div class="pg" style="left:1110px">4</div>
<div class="pg" style="left:1142px">5</div>
<div class="pg" style="left:1174px"></div>
<svg class="abs" style="left:1180px;top:649px" width="12" height="12" viewBox="0 0 12 12"><path d="M4.5 2L8.5 6L4.5 10" stroke="#303133" stroke-width="1.1" fill="none"/></svg>
<div class="abs" style="left:1218px;top:647px;font-size:12px;line-height:16px;color:#606266;white-space:nowrap">前往</div>
<div class="abs" style="left:1250px;top:643px;width:56px;height:24px;border:1px solid #dcdfe6;border-radius:3px;background:#fff;font-size:13px;line-height:22px;text-align:center;color:#606266">1</div>
<div class="abs" style="left:1314px;top:647px;font-size:12px;line-height:16px;color:#606266;white-space:nowrap">页</div>
<!-- footer -->
<div class="abs" style="left:239px;top:699px;width:1127px;text-align:center;font-size:14px;line-height:18px;color:#606266;white-space:nowrap">版权所有 © 2026 优学宝知识付费系统。保留所有权利。 ICP备案号：测试12342132321</div>

</body></html>
